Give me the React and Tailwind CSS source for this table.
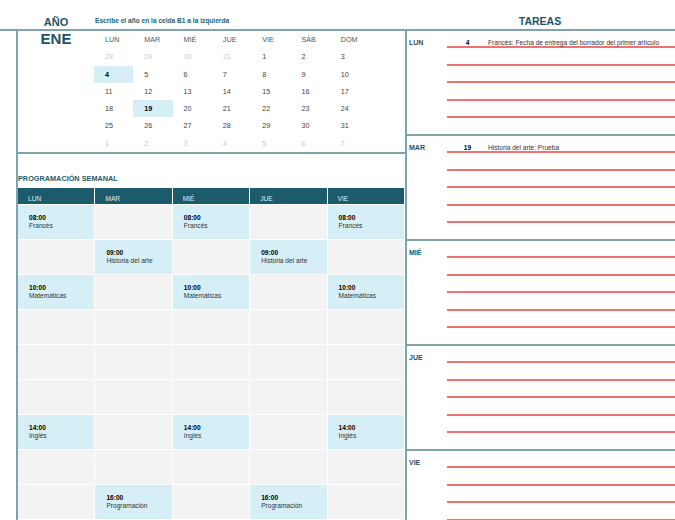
import React from "react";

const weeks = [
  [[28, 1], [29, 1], [30, 1], [31, 1], [1], [2], [3]],
  [[4, 0, 1], [5], [6], [7], [8], [9], [10]],
  [[11], [12], [13], [14], [15], [16], [17]],
  [[18], [19, 0, 1], [20], [21], [22], [23], [24]],
  [[25], [26], [27], [28], [29], [30], [31]],
  [[1, 1], [2, 1], [3, 1], [4, 1], [5, 1], [6, 1], [7, 1]],
];

const calHeads = ["LUN", "MAR", "MIÉ", "JUE", "VIE", "SÁB", "DOM"];
const weekHeads = ["LUN", "MAR", "MIÉ", "JUE", "VIE"];

const F = ["08:00", "Francés"];
const H = ["09:00", "Historia del arte"];
const M = ["10:00", "Matemáticas"];
const I = ["14:00", "Inglés"];
const P = ["16:00", "Programación"];

const schedule = [
  [F, null, F, null, F],
  [null, H, null, H, null],
  [M, null, M, null, M],
  [null, null, null, null, null],
  [null, null, null, null, null],
  [null, null, null, null, null],
  [I, null, I, null, I],
  [null, null, null, null, null],
  [null, P, null, P, null],
  [null, null, null, null, null],
];

const tasks = [
  { day: "LUN", num: "4", text: "Francés: Fecha de entrega del borrador del primer artículo" },
  { day: "MAR", num: "19", text: "Historia del arte: Prueba" },
  { day: "MIÉ" },
  { day: "JUE" },
  { day: "VIE" },
];

function TaskSection({ t }) {
  return (
    <div className="h-[105px] shrink-0 flex border-b-2 border-[#7ea3ad]">
      <div className="w-[40px] pl-[2px]">
        <div className="h-[17.4px] flex items-end pb-[2px] text-[7px] font-bold leading-none text-[#1d5368]">
          {t.day}
        </div>
      </div>
      <div className="flex-1 flex flex-col">
        {[0, 1, 2, 3, 4].map((i) => (
          <div key={i} className="h-[17.4px] shrink-0 flex items-end border-b-2 border-[#ef7272]">
            {i === 0 && t.num ? (
              <>
                <div className="w-[41px] text-center text-[6.6px] font-bold leading-none text-black">{t.num}</div>
                <div className="text-[6.6px] leading-none text-[#333] whitespace-nowrap">{t.text}</div>
              </>
            ) : null}
          </div>
        ))}
      </div>
    </div>
  );
}

export default function App() {
  return (
    <div className="w-[675px] h-[520px] overflow-hidden bg-white font-['Liberation_Sans',Arial,sans-serif]">
      <div className="flex h-[29px]">
        <div className="w-[18px]" />
        <div className="w-[76px] flex justify-center items-start pt-[17px]">
          <span className="text-[11px] font-bold leading-none text-[#1d5368]">AÑO</span>
        </div>
        <div className="w-[311px] flex items-start pt-[18.4px] pl-[1px]">
          <span className="text-[6.6px] font-bold leading-none text-[#1f5f70] whitespace-nowrap">
            Escribe el año en la celda B1 a la izquierda
          </span>
        </div>
        <div className="flex-1 flex justify-center items-start pt-[16px]">
          <span className="text-[10.5px] font-bold leading-none text-[#1d5368]">TAREAS</span>
        </div>
      </div>

      <div className="flex border-t-2 border-[#7ea3ad]">
        {/* left panel */}
        <div className="ml-[16px] w-[389px] shrink-0 border-l-2 border-[#7ea3ad]">
          {/* calendar */}
          <div className="h-[123px] flex border-b-2 border-[#7ea3ad]">
            <div className="w-[76px] flex justify-center items-start">
              <span className="text-[15px] font-bold leading-none text-[#1d5368]">ENE</span>
            </div>
            <div className="w-[275px] grid grid-cols-7 grid-rows-7">
              {calHeads.map((h) => (
                <div key={h} className="flex items-center pl-[11px] text-[7.2px] leading-none text-[#555]">
                  {h}
                </div>
              ))}
              {weeks.flat().map(([n, dim, hl], idx) => (
                <div
                  key={idx}
                  className={
                    "flex items-center pl-[11px] text-[7.2px] leading-none " +
                    (hl ? "bg-[#d6eff6] font-bold text-black " : "") +
                    (dim ? "text-[#c9c9c9]" : hl ? "" : "text-[#444]")
                  }
                >
                  {n}
                </div>
              ))}
            </div>
          </div>

          {/* weekly schedule */}
          <div className="h-[34px] flex items-end pb-[6px]">
            <span className="text-[7.3px] font-bold leading-none text-[#1d5c6c] whitespace-nowrap">
              PROGRAMACIÓN SEMANAL
            </span>
          </div>
          <div className="pr-[1px]">
            <div className="grid grid-cols-5 gap-x-px">
              {weekHeads.map((h) => (
                <div key={h} className="h-[16px] bg-[#1c5b6b] flex items-end pb-[1px] pl-[10px] text-[6.6px] leading-none text-[#e3eef1]">
                  {h}
                </div>
              ))}
            </div>
            <div className="grid grid-cols-5 gap-px mt-px">
              {schedule.flat().map((c, idx) => (
                <div
                  key={idx}
                  className={
                    "h-[34px] pl-[11px] pt-[9px] text-[6.6px] leading-[8px] " +
                    (c ? "bg-[#d6eff6]" : "bg-[#f3f3f3]")
                  }
                >
                  {c ? (
                    <>
                      <div className="font-bold text-black">{c[0]}</div>
                      <div className="text-[#333] whitespace-nowrap">{c[1]}</div>
                    </>
                  ) : null}
                </div>
              ))}
            </div>
          </div>
        </div>

        {/* right panel */}
        <div className="w-[270px] shrink-0 border-l-2 border-[#7ea3ad] flex flex-col">
          {tasks.map((t) => (
            <TaskSection key={t.day} t={t} />
          ))}
        </div>
      </div>
    </div>
  );
}
